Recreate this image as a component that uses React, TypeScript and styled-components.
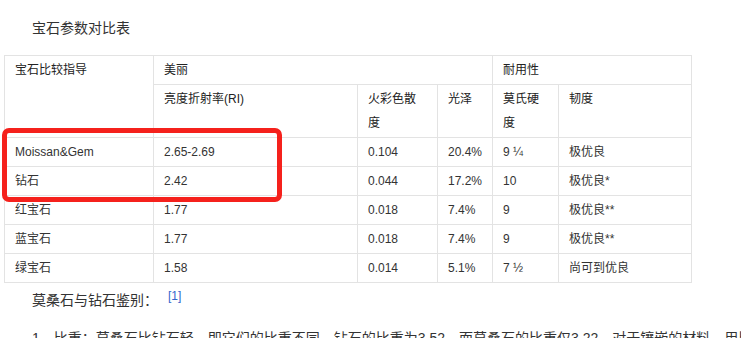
import * as React from "react";
import styled, { createGlobalStyle } from "styled-components";

const GlobalStyle = createGlobalStyle`
  html, body {
    margin: 0;
    padding: 0;
    background: #fff;
  }
  body {
    font-family: "Liberation Sans", "Noto Sans CJK SC", sans-serif;
    color: #333;
  }
`;

const Page = styled.div`
  position: relative;
  width: 741px;
  height: 338px;
  overflow: hidden;
  padding: 16px 0 0 4px;
  box-sizing: border-box;
`;

const Para = styled.p<{ $gap?: number }>`
  margin: 0 0 ${(p) => p.$gap ?? 0}px 0;
  font-size: 14px;
  line-height: 24px;
  text-indent: 28px;
  white-space: nowrap;
  color: #333;
`;

const Ref = styled.sup`
  font-size: 12px;
  line-height: 0;
  color: #3366cc;
  margin-left: 10px;
  position: relative;
  top: -5px;
  vertical-align: baseline;
`;

const Table = styled.table`
  width: 687px;
  table-layout: fixed;
  border-collapse: collapse;
  margin: 0 0 5px 0;
  font-size: 12px;
  line-height: 24px;
  color: #333;
`;

const Head = styled.th`
  border: 1px solid #e3e3e3;
  padding: 2px 10px;
  text-align: left;
  vertical-align: top;
  font-weight: normal;
  color: #222;
`;

const Cell = styled.td`
  border: 1px solid #e3e3e3;
  padding: 2px 10px;
  text-align: left;
  vertical-align: top;
  white-space: nowrap;
`;

const Highlight = styled.div`
  position: absolute;
  left: 2px;
  top: 128px;
  width: 280px;
  height: 74px;
  box-sizing: border-box;
  border: 5px solid #f5211c;
  border-radius: 7px;
`;

const widths = [149, 204, 80, 55, 66, 133];

const rows = [
  ["Moissan&Gem", "2.65-2.69", "0.104", "20.4%", "9 ¼", "极优良"],
  ["钻石", "2.42", "0.044", "17.2%", "10", "极优良*"],
  ["红宝石", "1.77", "0.018", "7.4%", "9", "极优良**"],
  ["蓝宝石", "1.77", "0.018", "7.4%", "9", "极优良**"],
  ["绿宝石", "1.58", "0.014", "5.1%", "7 ½", "尚可到优良"],
];

export default function App() {
  return (
    <>
      <GlobalStyle />
      <Page>
        <Para $gap={15}>宝石参数对比表</Para>
        <Table>
          <colgroup>
            {widths.map((w, i) => (
              <col key={i} style={{ width: w }} />
            ))}
          </colgroup>
          <thead>
            <tr>
              <Head rowSpan={2}>宝石比较指导</Head>
              <Head colSpan={3}>美丽</Head>
              <Head colSpan={2}>耐用性</Head>
            </tr>
            <tr>
              <Head>亮度折射率(RI)</Head>
              <Head>火彩色散度</Head>
              <Head>光泽</Head>
              <Head>莫氏硬度</Head>
              <Head>韧度</Head>
            </tr>
          </thead>
          <tbody>
            {rows.map((r, i) => (
              <tr key={i}>
                {r.map((c, j) => (
                  <Cell key={j}>{c}</Cell>
                ))}
              </tr>
            ))}
          </tbody>
        </Table>
        <Para $gap={14}>
          莫桑石与钻石鉴别：<Ref>[1]</Ref>
        </Para>
        <Para>
          1、比重：莫桑石比钻石轻，即它们的比重不同，钻石的比重为3.52，而莫桑石的比重仅3.22，对于镶嵌的材料，用比重液来检测
        </Para>
        <Highlight />
      </Page>
    </>
  );
}
